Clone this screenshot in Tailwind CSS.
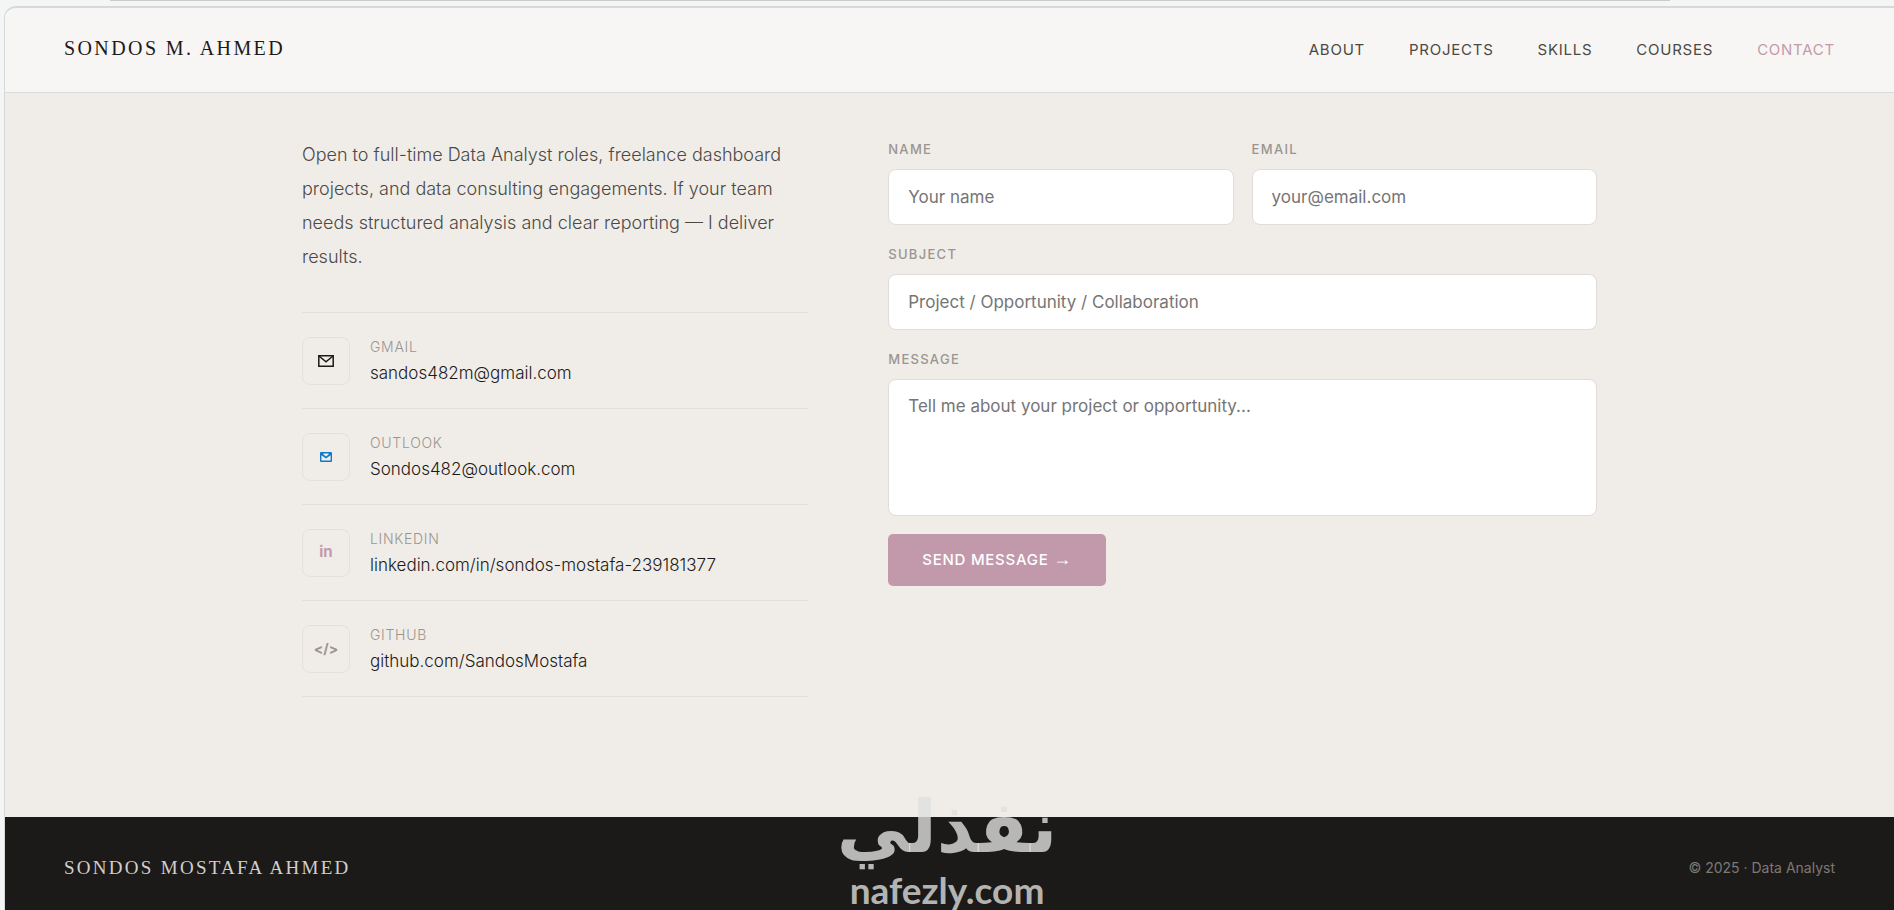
<!DOCTYPE html>
<html lang="en">
<head>
  <meta charset="UTF-8">
  <meta name="viewport" content="width=device-width, initial-scale=1.0">
  <script src="https://cdn.jsdelivr.net/npm/@tailwindcss/browser@4"></script>
  <title>Sondos M. Ahmed | Contact</title>
</head>
<body class="relative flex flex-col min-h-screen pt-[6px] pl-1 bg-[#f4f5f5] overflow-hidden font-['Inter','Liberation_Sans',sans-serif] text-[#1c1a18]">
  <div class="absolute top-0 left-[110px] right-[224px] h-px bg-[#cbcbcb]"></div>

  <div class="flex flex-col flex-1 border-t-2 border-l border-[#d5d9d9] rounded-tl-xl overflow-hidden bg-[#f0ede9]">

    <!-- Header -->
    <header class="flex items-center justify-between h-[85px] px-[59px] bg-[#f7f6f4] border-b border-[#dcdcda]">
      <a href="#" class="pb-1 font-['Liberation_Serif',serif] font-medium text-[20px] leading-7 tracking-[0.12em]">SONDOS M. AHMED</a>
      <nav class="flex gap-11 text-[15px] leading-6 tracking-wider text-[#4c4945]">
        <a href="#about">ABOUT</a>
        <a href="#projects">PROJECTS</a>
        <a href="#skills">SKILLS</a>
        <a href="#courses">COURSES</a>
        <a href="#contact" class="text-[#c49aab]">CONTACT</a>
      </nav>
    </header>

    <!-- Contact -->
    <main id="contact" class="flex-1 px-6 pt-[45px] pb-[60px]">
      <div class="grid grid-cols-[1fr_1.4fr] gap-20 max-w-[1295px] mx-auto">

        <div>
          <p class="text-[18px] leading-[34px] font-light text-[#4c4945]">Open to full-time Data Analyst roles, freelance dashboard projects, and data consulting engagements. If your team needs structured analysis and clear reporting — I deliver results.</p>

          <ul class="mt-[38px] border-t border-[#e2dfdc]">
            <li class="border-b border-[#e2dfdc]">
              <a href="mailto:sandos482m@gmail.com" class="flex items-center gap-5 h-[95px]">
                <span class="flex items-center justify-center size-12 border border-[#e4e0dd] rounded-lg">
                  <svg class="w-4 h-3" viewBox="0 0 16 12" fill="none" stroke="#1c1a18" stroke-width="1.5"><path d="M.8.8h14.4v10.4H.8z"/><path d="M1 1l7 5.8L15 1"/></svg>
                </span>
                <span class="flex flex-col">
                  <span class="text-[14px] leading-6 tracking-wider font-light text-[#9a958f]">GMAIL</span>
                  <span class="text-[17px] leading-7 font-light">sandos482m@gmail.com</span>
                </span>
              </a>
            </li>
            <li class="border-b border-[#e2dfdc]">
              <a href="mailto:Sondos482@outlook.com" class="flex items-center gap-5 h-[95px]">
                <span class="flex items-center justify-center size-12 border border-[#e4e0dd] rounded-lg">
                  <svg class="w-3 h-[10px]" viewBox="0 0 12 10"><rect width="12" height="10" rx="1" fill="#0f7bc8"/><path d="M1.4 3.2L6 6.4l4.6-3.2v5.3H1.4z" fill="#f0ede9"/><path d="M3.4 1.6h5.2v1L6 4.4 3.4 2.6z" fill="#f0ede9"/></svg>
                </span>
                <span class="flex flex-col">
                  <span class="text-[14px] leading-6 tracking-wider font-light text-[#9a958f]">OUTLOOK</span>
                  <span class="text-[17px] leading-7 font-light">Sondos482@outlook.com</span>
                </span>
              </a>
            </li>
            <li class="border-b border-[#e2dfdc]">
              <a href="#" class="flex items-center gap-5 h-[95px]">
                <span class="flex items-center justify-center size-12 border border-[#e4e0dd] rounded-lg text-[15px] font-bold text-[#c49aab]">in</span>
                <span class="flex flex-col">
                  <span class="text-[14px] leading-6 tracking-wider font-light text-[#9a958f]">LINKEDIN</span>
                  <span class="text-[17px] leading-7 font-light">linkedin.com/in/sondos-mostafa-239181377</span>
                </span>
              </a>
            </li>
            <li class="border-b border-[#e2dfdc]">
              <a href="#" class="flex items-center gap-5 h-[95px]">
                <span class="flex items-center justify-center size-12 border border-[#e4e0dd] rounded-lg text-[14px] font-bold text-[#9a958f]">&lt;/&gt;</span>
                <span class="flex flex-col">
                  <span class="text-[14px] leading-6 tracking-wider font-light text-[#9a958f]">GITHUB</span>
                  <span class="text-[17px] leading-7 font-light">github.com/SandosMostafa</span>
                </span>
              </a>
            </li>
          </ul>
        </div>

        <form class="grid grid-cols-2 gap-[18px] content-start" onsubmit="return false">
          <div class="flex flex-col gap-[9px]">
            <label for="name" class="text-[13px] leading-[22px] tracking-widest font-medium text-[#9a958f]">NAME</label>
            <input id="name" type="text" placeholder="Your name" class="w-full h-14 px-[19px] text-[17px] bg-white border border-[#dfdcda] rounded-lg placeholder:text-[#757575]">
          </div>
          <div class="flex flex-col gap-[9px]">
            <label for="email" class="text-[13px] leading-[22px] tracking-widest font-medium text-[#9a958f]">EMAIL</label>
            <input id="email" type="email" placeholder="your@email.com" class="w-full h-14 px-[19px] text-[17px] bg-white border border-[#dfdcda] rounded-lg placeholder:text-[#757575]">
          </div>
          <div class="col-span-2 flex flex-col gap-[9px]">
            <label for="subject" class="text-[13px] leading-[22px] tracking-widest font-medium text-[#9a958f]">SUBJECT</label>
            <input id="subject" type="text" placeholder="Project / Opportunity / Collaboration" class="w-full h-14 px-[19px] text-[17px] bg-white border border-[#dfdcda] rounded-lg placeholder:text-[#757575]">
          </div>
          <div class="col-span-2 flex flex-col gap-[9px]">
            <label for="message" class="text-[13px] leading-[22px] tracking-widest font-medium text-[#9a958f]">MESSAGE</label>
            <textarea id="message" placeholder="Tell me about your project or opportunity..." class="w-full h-[137px] px-[19px] py-[14px] text-[17px] leading-6 bg-white border border-[#dfdcda] rounded-lg resize-none placeholder:text-[#757575]"></textarea>
          </div>
          <button type="submit" class="justify-self-start h-[52px] px-[34px] text-[15px] tracking-wider font-medium text-white bg-[#c299ab] rounded-[5px]">SEND MESSAGE <span class="font-['Liberation_Sans',sans-serif] text-[18px] leading-none">→</span></button>
        </form>

      </div>
    </main>

    <!-- Footer -->
    <footer class="flex items-center justify-between h-[93px] px-[59px] pt-[9px] bg-[#1c1a18] text-[#d2cfcb]">
      <span class="font-['Liberation_Serif',serif] text-[19px] leading-7 tracking-[0.12em]">SONDOS MOSTAFA AHMED</span>
      <span class="text-[14px] leading-6 text-[#7d7975]">© 2025 · Data Analyst</span>
    </footer>
  </div>

  <!-- Watermark over the page -->
  <div class="absolute bottom-0 left-1/2 -translate-x-1/2 flex flex-col items-center text-[#dedfdd]/80 pointer-events-none">
    <span lang="ar" dir="rtl" class="font-['DejaVu_Sans',sans-serif] font-bold text-[72px] leading-[86px]">نفذلي</span>
    <span class="font-['Lato',sans-serif] font-bold text-[37px] leading-10">nafezly.com</span>
  </div>
</body>
</html>
